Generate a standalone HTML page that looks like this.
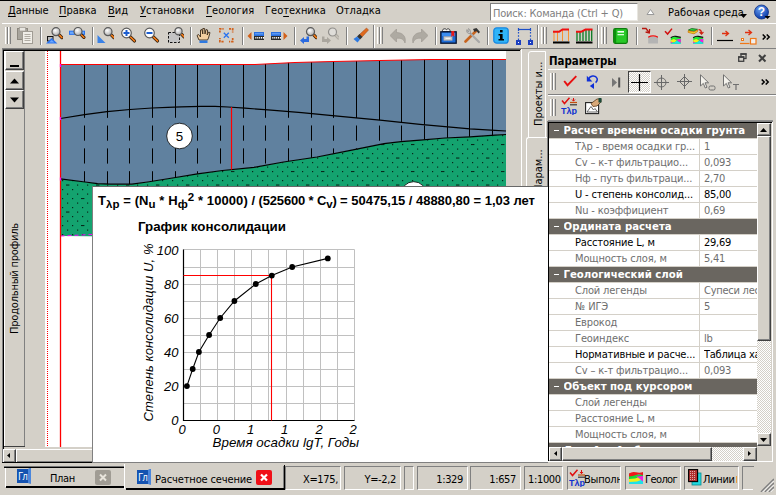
<!DOCTYPE html>
<html lang="ru"><head><meta charset="utf-8"><title>Расчетное сечение</title>
<style>
html,body{margin:0;padding:0;}
body{width:776px;height:495px;overflow:hidden;background:#d4d0c8;position:relative;font-family:'DejaVu Sans Condensed','Liberation Sans',sans-serif;font-size:11px;color:#000;}
.a{position:absolute;white-space:nowrap;}
.ui{font-family:'DejaVu Sans Condensed','Liberation Sans',sans-serif;font-size:11px;line-height:13px;}
.ar{font-family:'Liberation Sans',sans-serif;}
u{text-decoration:underline;text-underline-offset:1.5px;text-decoration-skip-ink:none;text-decoration-thickness:1px;}
.btn{position:absolute;background:#d4d0c8;box-sizing:border-box;border:1px solid;border-color:#fff #404040 #404040 #fff;box-shadow:inset -1px -1px 0 #808080;}
.sunk{position:absolute;box-sizing:border-box;border:1px solid;border-color:#808080 #fff #fff #808080;}
.grip{position:absolute;width:1px;height:17px;background:#d4d0c8;border-left:1px solid #fff;border-right:1px solid #808080;}
.sep{position:absolute;width:1px;height:18px;background:#808080;border-right:1px solid #fff;}
.row{position:absolute;left:549px;width:208px;height:16px;box-sizing:border-box;border-bottom:1px solid #d4d0c8;background:#fff;}
.hdr{background:#6a6660;color:#fff;font-weight:bold;}
.cell{position:absolute;top:0;height:15px;line-height:15px;overflow:hidden;white-space:nowrap;}
.dis{color:#6e6e6e;}
.chk{background-image:conic-gradient(#fff 25%,#d4d0c8 0 50%,#fff 0 75%,#d4d0c8 0);background-size:2px 2px;}
</style></head><body>

<div class="a" style="left:0;top:0;width:776px;height:1px;background:#000"></div>
<div class="a ui" style="left:8px;top:4px"><u>Д</u>анные</div>
<div class="a ui" style="left:59px;top:4px"><u>П</u>равка</div>
<div class="a ui" style="left:108px;top:4px"><u>В</u>ид</div>
<div class="a ui" style="left:140px;top:4px"><u>У</u>становки</div>
<div class="a ui" style="left:206px;top:4px"><u>Г</u>еология</div>
<div class="a ui" style="left:265px;top:4px">Гео<u>т</u>ехника</div>
<div class="a ui" style="left:336px;top:4px">Отладка</div>
<div class="a" style="left:490px;top:3px;width:148px;height:18px;box-sizing:border-box;background:#fff;border:1px solid;border-color:#808080 #e8e6e0 #e8e6e0 #808080;"></div>
<div class="a ui" style="left:493px;top:7px;color:#808080;letter-spacing:-0.19px">Поиск: Команда (Ctrl + Q)</div>
<svg class="a" style="left:646px;top:8px" width="9" height="8"><path d="M1 6.5 L4.5 1.5 L8 6.5 Z" fill="#fff" stroke="#9a9a9a"/></svg>
<div class="a ui" style="left:668px;top:6px;">Рабочая среда</div>
<svg class="a" style="left:740px;top:13.5px" width="7" height="4"><path d="M0 0 H7 L3.5 4 Z" fill="#000"/></svg>
<svg class="a" style="left:753px;top:4px" width="19" height="17" viewBox="0 0 19 17"><defs><radialGradient id="hg" cx="40%" cy="30%" r="70%"><stop offset="0" stop-color="#6aa0f0"/><stop offset="1" stop-color="#0a3aa8"/></radialGradient></defs><circle cx="8.5" cy="8" r="7" fill="url(#hg)" stroke="#0a2f86" stroke-width=".8"/><text x="8.5" y="12.3" text-anchor="middle" font-family="Liberation Sans,sans-serif" font-weight="bold" font-size="12" fill="#fff">?</text><path d="M11.5 12 H17.5 L14.5 15 Z" fill="#000"/></svg>
<div class="a" style="left:2px;top:23px;width:774px;height:1px;background:#fff"></div>
<svg width="0" height="0" style="position:absolute"><defs><radialGradient id="gl" cx="40%" cy="35%" r="70%"><stop offset="0" stop-color="#ffffff"/><stop offset="1" stop-color="#a8a8a8"/></radialGradient></defs></svg>
<div class="grip" style="left:5px;top:27px;height:17px"></div>
<div class="grip" style="left:8px;top:27px;height:17px"></div>
<svg class="a" style="left:17px;top:27px" width="17" height="18" viewBox="0 0 17 18"><rect x="0.5" y="1.5" width="10" height="11" fill="#a8a59d" stroke="#8c887f"/><rect x="2.5" y="0.5" width="6" height="3.5" fill="#e8e6e0" stroke="#a09c94" stroke-width=".7"/><rect x="5.5" y="4.5" width="10" height="12" fill="#f0eee8" stroke="#a09c94"/><path d="M7.5 7.5H13.5M7.5 9.5H13.5M7.5 11.5H13.5M7.5 13.5H13.5" stroke="#b0aca4" stroke-width="1"/></svg>
<div class="sep" style="left:40px;top:27px;height:18px"></div>
<svg class="a" style="left:46px;top:27px" width="17" height="17" viewBox="0 0 17 17"><line x1="13.479999999999999" y1="8.18" x2="15.879999999999999" y2="10.58" stroke="#2a1a0a" stroke-width="3.2" stroke-linecap="round"/><line x1="13.479999999999999" y1="8.18" x2="15.879999999999999" y2="10.58" stroke="#f07a18" stroke-width="1.7" stroke-linecap="round"/><circle cx="10" cy="4.7" r="4" fill="url(#gl)" stroke="#5a5a5a" stroke-width="1.2"/><rect x="1.5" y="9.5" width="5.5" height="4.5" fill="#b8b8b8" stroke="#111"/><path d="M0 16.6 L5.7 11 L11.4 16.6 Z" fill="#2a74f0"/><path d="M3 15.6 L5.7 13 L8.4 15.6 Z" fill="#6aa8ff"/></svg>
<svg class="a" style="left:69px;top:27px" width="17" height="17" viewBox="0 0 17 17"><rect x="0" y="3.7" width="16" height="4.2" fill="#2a74f0"/><rect x="1" y="4.7" width="14" height="2.2" fill="#6aa8ff"/><line x1="12.479999999999999" y1="7.9799999999999995" x2="14.879999999999999" y2="10.379999999999999" stroke="#2a1a0a" stroke-width="3.2" stroke-linecap="round"/><line x1="12.479999999999999" y1="7.9799999999999995" x2="14.879999999999999" y2="10.379999999999999" stroke="#f07a18" stroke-width="1.7" stroke-linecap="round"/><circle cx="9" cy="4.5" r="4" fill="url(#gl)" stroke="#5a5a5a" stroke-width="1.2"/></svg>
<div class="sep" style="left:92px;top:27px;height:18px"></div>
<svg class="a" style="left:97px;top:27px" width="17" height="17" viewBox="0 0 17 17"><line x1="14.479999999999999" y1="8.18" x2="16.88" y2="10.58" stroke="#2a1a0a" stroke-width="3.2" stroke-linecap="round"/><line x1="14.479999999999999" y1="8.18" x2="16.88" y2="10.58" stroke="#f07a18" stroke-width="1.7" stroke-linecap="round"/><circle cx="11" cy="4.7" r="4" fill="url(#gl)" stroke="#5a5a5a" stroke-width="1.2"/><path d="M0.5 16 V8 L8.5 16 Z" fill="#3a82e6"/></svg>
<svg class="a" style="left:121px;top:27px" width="17" height="17" viewBox="0 0 17 17"><line x1="9.556" y1="10.056" x2="13.456" y2="13.956" stroke="#2a1a0a" stroke-width="3.2" stroke-linecap="round"/><line x1="9.556" y1="10.056" x2="13.456" y2="13.956" stroke="#f07a18" stroke-width="1.7" stroke-linecap="round"/><circle cx="5.5" cy="6" r="4.8" fill="#fff" stroke="#5a5a5a" stroke-width="1.2"/><path d="M2.5 6H8.5M5.5 3V9" stroke="#1c5ed0" stroke-width="2"/></svg>
<svg class="a" style="left:144px;top:27px" width="17" height="17" viewBox="0 0 17 17"><line x1="9.556" y1="10.056" x2="13.456" y2="13.956" stroke="#2a1a0a" stroke-width="3.2" stroke-linecap="round"/><line x1="9.556" y1="10.056" x2="13.456" y2="13.956" stroke="#f07a18" stroke-width="1.7" stroke-linecap="round"/><circle cx="5.5" cy="6" r="4.8" fill="#fff" stroke="#5a5a5a" stroke-width="1.2"/><path d="M2.5 6H8.5" stroke="#1c5ed0" stroke-width="2"/></svg>
<svg class="a" style="left:167px;top:27px" width="17" height="17" viewBox="0 0 17 17"><rect x="1.5" y="5.5" width="11" height="10" fill="#c4c4c4" stroke="#111" stroke-dasharray="2.5 1.5"/><line x1="14.692" y1="7.3919999999999995" x2="17.092" y2="9.792" stroke="#2a1a0a" stroke-width="3.2" stroke-linecap="round"/><line x1="14.692" y1="7.3919999999999995" x2="17.092" y2="9.792" stroke="#f07a18" stroke-width="1.7" stroke-linecap="round"/><circle cx="11.5" cy="4.2" r="3.6" fill="url(#gl)" stroke="#5a5a5a" stroke-width="1.2"/></svg>
<div class="sep" style="left:190px;top:27px;height:18px"></div>
<svg class="a" style="left:196px;top:27px" width="16" height="17" viewBox="0 0 16 17"><path d="M3 13 L1 8.5 L2.5 7.5 L4.5 10 V3 L6 2.5 L6.8 7 V1.5 L8.6 1.5 L9 7 L10 2.5 L11.6 3 L11.2 8 L12.6 5 L14 5.6 L12.5 11 L11.5 13 Z" fill="#f3cfa0" stroke="#3a2a1a" stroke-width=".9" stroke-linejoin="round"/><rect x="3.5" y="13.5" width="8" height="2.5" fill="#2f7ae0"/></svg>
<svg class="a" style="left:219px;top:28px" width="15" height="15" viewBox="0 0 15 15"><path d="M4.8 4.8 L9.8 9.8 M9.8 4.8 L4.8 9.8" stroke="#2a74f0" stroke-width="1.3"/><path d="M0.9 4.6 V0.9 H4.6 M10 0.9 H13.7 V4.6 M13.7 10 V13.7 H10 M4.6 13.7 H0.9 V10" fill="none" stroke="#d2601a" stroke-width="1.7" stroke-dasharray="2.2 0.9"/></svg>
<div class="sep" style="left:242px;top:27px;height:18px"></div>
<svg class="a" style="left:247px;top:29px" width="18" height="14" viewBox="0 0 18 14"><path d="M0.5 7 L4.5 3 V11 Z" fill="#d2601a"/><rect x="7" y="3" width="10" height="8" fill="#2a2a2a"/><rect x="7" y="3" width="10" height="4" fill="#2a70e0"/><rect x="8" y="4" width="8" height="1.5" fill="#5a98f4"/><rect x="8.3" y="8" width="1.1" height="1.6" fill="#fff"/><rect x="10.200000000000001" y="8" width="1.1" height="1.6" fill="#fff"/><rect x="12.100000000000001" y="8" width="1.1" height="1.6" fill="#fff"/><rect x="14.0" y="8" width="1.1" height="1.6" fill="#fff"/><rect x="15.9" y="8" width="1.1" height="1.6" fill="#fff"/></svg>
<svg class="a" style="left:270px;top:29px" width="18" height="14" viewBox="0 0 18 14"><path d="M17.5 7 L13.5 3 V11 Z" fill="#d2601a"/><rect x="1" y="3" width="10" height="8" fill="#2a2a2a"/><rect x="1" y="3" width="10" height="4" fill="#2a70e0"/><rect x="2" y="4" width="8" height="1.5" fill="#5a98f4"/><rect x="2.3" y="8" width="1.1" height="1.6" fill="#fff"/><rect x="4.199999999999999" y="8" width="1.1" height="1.6" fill="#fff"/><rect x="6.1" y="8" width="1.1" height="1.6" fill="#fff"/><rect x="7.999999999999999" y="8" width="1.1" height="1.6" fill="#fff"/><rect x="9.899999999999999" y="8" width="1.1" height="1.6" fill="#fff"/></svg>
<div class="sep" style="left:294px;top:27px;height:18px"></div>
<svg class="a" style="left:300px;top:27px" width="17" height="17" viewBox="0 0 17 17"><line x1="13.979999999999999" y1="8.18" x2="16.38" y2="10.58" stroke="#2a1a0a" stroke-width="3.2" stroke-linecap="round"/><line x1="13.979999999999999" y1="8.18" x2="16.38" y2="10.58" stroke="#f07a18" stroke-width="1.7" stroke-linecap="round"/><circle cx="10.5" cy="4.7" r="4" fill="url(#gl)" stroke="#5a5a5a" stroke-width="1.2"/><path d="M0 13.5 L4 10 V12 H6.5 V9.5 H9 V15 H4 V17 Z" fill="#2a6ae0"/></svg>
<svg class="a" style="left:322px;top:27px" width="17" height="17" viewBox="0 0 17 17"><g opacity=".55"><line x1="13.979999999999999" y1="8.48" x2="16.38" y2="10.879999999999999" stroke="#8c887f" stroke-width="3.2" stroke-linecap="round"/><line x1="13.979999999999999" y1="8.48" x2="16.38" y2="10.879999999999999" stroke="#b8b4ac" stroke-width="1.7" stroke-linecap="round"/><circle cx="10.5" cy="5" r="4" fill="#e8e8e8" stroke="#5a5a5a" stroke-width="1.2"/></g><path d="M9 13.5 L5 10 V12 H2.5 V9.5 H0 V15 H5 V17 Z" fill="#aaa69e"/></svg>
<div class="sep" style="left:346px;top:27px;height:18px"></div>
<svg class="a" style="left:353px;top:27px" width="16" height="17" viewBox="0 0 16 17"><path d="M13.5 1 L15.5 3 L9 10 L6.5 7.5 Z" fill="#e06a1e" stroke="#a04410" stroke-width=".5"/><path d="M6.5 7 L9.5 10 L7 12.5 L4 9.5 Z" fill="#333"/><path d="M4 9.5 L7 12.5 L4.5 15.5 L0.5 12 Z" fill="#2f7ae0"/></svg>
<div class="sep" style="left:373px;top:25px;height:23px"></div>
<div class="grip" style="left:377px;top:27px;height:17px"></div>
<div class="grip" style="left:380px;top:27px;height:17px"></div>
<svg class="a" style="left:390px;top:28px" width="17" height="16" viewBox="0 0 17 16"><path d="M0 7.5 L6.5 1 V4.5 C13 4.5 16.5 9 15 15 C13.5 10.5 10.5 10 6.5 10.3 V14 Z" fill="#aeaaa2" stroke="#9a968e" stroke-width=".6"/></svg>
<svg class="a" style="left:411px;top:28px" width="17" height="16" viewBox="0 0 17 16"><path d="M17 7.5 L10.5 1 V4.5 C4 4.5 0.5 9 2 15 C3.5 10.5 6.5 10 10.5 10.3 V14 Z" fill="#aeaaa2" stroke="#9a968e" stroke-width=".6"/></svg>
<div class="sep" style="left:435px;top:27px;height:18px"></div>
<svg class="a" style="left:440px;top:27px" width="17" height="17" viewBox="0 0 17 17"><path d="M2.5 4.5 C2 1.8 5 1 6.5 2.6 C8 1 10.5 2 10 4.5 Z" fill="#f4f4f4" stroke="#333" stroke-width="1"/><rect x="0.8" y="4.8" width="15.4" height="11.4" fill="#1c6cd8" stroke="#0a1430" stroke-width="1.3"/><rect x="2" y="6" width="13" height="3" fill="#3a8cf0"/><rect x="3.8" y="9.3" width="8.4" height="4.2" fill="#c8c8c8" stroke="#8a98b0" stroke-width=".6"/><rect x="5.5" y="10.8" width="5" height="1.2" fill="#f0f0f0"/><path d="M11.3 4 H14.3 V10 L12.8 8.6 L11.3 10 Z" fill="#e81818"/></svg>
<svg class="a" style="left:464px;top:27px" width="17" height="17" viewBox="0 0 17 17"><path d="M1.5 14.5 L12 4" stroke="#c8641e" stroke-width="2.6" stroke-linecap="round"/><path d="M9 2 L12.5 1 L16 5 L14.5 6.5 L12.5 4 L10.5 5 Z" fill="#333"/><path d="M15 15 L6.5 6.5" stroke="#a8a8a8" stroke-width="2.2" stroke-linecap="round"/><path d="M3 2.5 C2 4 3 6.5 5 6.5 L6.8 6.8 L6.5 5 C6.5 3 5.5 2 4.5 1.5 L5 4 L4 4.8 Z" fill="#c4c4c4" stroke="#777" stroke-width=".5"/></svg>
<div class="sep" style="left:487px;top:27px;height:18px"></div>
<svg class="a" style="left:493px;top:27px" width="16" height="17" viewBox="0 0 16 17"><rect x="0.8" y="0.8" width="14.4" height="15.4" rx="3" fill="#30b4f8" stroke="#1a88e0" stroke-width="1.3"/><rect x="7" y="3" width="2.6" height="2.4" fill="#000"/><path d="M5.5 7 H9.6 V12 H11 V13.6 H5.5 V12 H7 V8.6 H5.5 Z" fill="#000"/></svg>
<svg class="a" style="left:516px;top:28px" width="17" height="17" viewBox="0 0 17 17"><path d="M2.5 1.5 H14.5" stroke="#1c4fc8" stroke-width="1.2"/><path d="M2.5 0 V3 M14.5 0 V3" stroke="#1c4fc8" stroke-width="1.2"/><path d="M2.5 4 V13 M14.5 4 V13" stroke="#1c4fc8" stroke-width="1.2" stroke-dasharray="1.6 1.6"/><rect x="1" y="13" width="3" height="3" fill="#fff" stroke="#1c3fc0" stroke-width="1.1" shape-rendering="crispEdges"/><rect x="13" y="13" width="3" height="3" fill="#fff" stroke="#1c3fc0" stroke-width="1.1" shape-rendering="crispEdges"/></svg>
<div class="sep" style="left:537px;top:25px;height:23px"></div>
<div class="grip" style="left:541px;top:27px;height:17px"></div>
<div class="grip" style="left:544px;top:27px;height:17px"></div>
<svg class="a" style="left:553px;top:28px" width="17" height="17" viewBox="0 0 17 17"><path d="M1 2.8 V13 M4.5 2.8 V13 M9.5 1 V13 M15.5 1 V13" stroke="#f89030" stroke-width="1"/><path d="M0 3.8 H6 L9.5 1.5 H16" fill="none" stroke="#f01010" stroke-width="2"/><rect x="0" y="13.5" width="16.5" height="2" fill="#000"/></svg>
<svg class="a" style="left:576px;top:28px" width="17" height="17" viewBox="0 0 17 17"><path d="M1 4 V13 M4 4 V13 M7 2.5 V13 M10 1.5 V13 M13 1.5 V13 M15.7 1.5 V13" stroke="#0a7a22" stroke-width="1.3"/><path d="M0 3.8 H5 L9.5 1.5 H16.5" fill="none" stroke="#f01010" stroke-width="2"/><rect x="0" y="13.5" width="16.5" height="2" fill="#000"/></svg>
<div class="sep" style="left:597px;top:25px;height:23px"></div>
<div class="grip" style="left:601px;top:27px;height:17px"></div>
<div class="grip" style="left:604px;top:27px;height:17px"></div>
<svg class="a" style="left:613px;top:28px" width="15" height="16" viewBox="0 0 15 16"><rect x="0.7" y="0.7" width="13.6" height="14.6" rx="1.5" fill="#28c828" stroke="#0c7c0c" stroke-width="1.2"/><rect x="0.9" y="0.9" width="2.3" height="14.2" fill="#0c900c"/><rect x="4.5" y="3" width="6.5" height="1.6" fill="#f4fff4"/><rect x="4.5" y="6" width="6.5" height="1.3" fill="#d8ffd8"/></svg>
<div class="sep" style="left:636px;top:27px;height:18px"></div>
<svg class="a" style="left:641px;top:27px" width="17" height="17" viewBox="0 0 17 17"><path d="M1 1.5 H5 L8 5.5" fill="none" stroke="#b81810" stroke-width="1.3"/><path d="M8.6 2 L8.3 6 L4.6 5" fill="none" stroke="#b81810" stroke-width="1.3"/><rect x="7.2" y="10" width="9.8" height="6.5" fill="#b4b4b4"/><path d="M7.2 10.2 Q12 7.4 17 10.2" fill="none" stroke="#f01010" stroke-width="1.2"/></svg>
<svg class="a" style="left:664px;top:27px" width="17" height="18" viewBox="0 0 17 18"><path d="M1 4.2 L3.6 7 L8 1.6" fill="none" stroke="#d01010" stroke-width="1.5"/><g transform="translate(6.8,8.8)"><path d="M0 2 Q2.5 0 5 0.6 T10 1.6 V8 H0 Z" fill="#20e838"/><path d="M0 2 Q2.5 0 5 0.6 T10 1.6" fill="none" stroke="#101010" stroke-width="1.2"/><path d="M0 4.5 L3 3.2 L6 4.6 L4 6.5 L0 7 Z" fill="#f4ec18"/><path d="M5.5 3.6 L10 3 V7 L7.5 5.6 Z" fill="#f020e0"/><path d="M0 8 V7 L3.5 6.8 L6.2 5 L10 7.2 V8 Z" fill="#18e0f0"/><path d="M0 5.6 L2 6.8 L0 7.4 Z" fill="#f020e0"/></g></svg>
<svg class="a" style="left:687px;top:27px" width="17" height="18" viewBox="0 0 17 18"><path d="M1.2 3.2 L4.5 1.5 L10.5 2.3 L7 4.3 Z" fill="#30d040" stroke="#106a18" stroke-width=".8"/><path d="M1.2 5.4 L1.2 3.8 L7 4.9 L10.5 2.9 V4.6 L7 6.8 Z" fill="#f4e020" stroke="#d07010" stroke-width=".8"/><path d="M11.5 2.6 C13.5 2.6 14.5 4 14.5 6.2 M12.6 5 L14.5 7.2 L16.4 5" fill="none" stroke="#d02010" stroke-width="1.2"/><g transform="translate(6.2,8.8)"><path d="M0 2 Q2.5 0 5 0.6 T10 1.6 V8 H0 Z" fill="#20e838"/><path d="M0 2 Q2.5 0 5 0.6 T10 1.6" fill="none" stroke="#101010" stroke-width="1.2"/><path d="M0 4.5 L3 3.2 L6 4.6 L4 6.5 L0 7 Z" fill="#f4ec18"/><path d="M5.5 3.6 L10 3 V7 L7.5 5.6 Z" fill="#f020e0"/><path d="M0 8 V7 L3.5 6.8 L6.2 5 L10 7.2 V8 Z" fill="#18e0f0"/><path d="M0 5.6 L2 6.8 L0 7.4 Z" fill="#f020e0"/></g></svg>
<div class="sep" style="left:711px;top:27px;height:18px"></div>
<svg class="a" style="left:717px;top:29.5px" width="17" height="12" viewBox="0 0 17 12"><path d="M5 3.5 H11 M8.5 1 L11.5 3.5 L8.5 6" fill="none" stroke="#e03010" stroke-width="1.3"/><path d="M0 10.5 H16" stroke="#000" stroke-width="1.2"/></svg>
<svg class="a" style="left:740px;top:29px" width="17" height="16" viewBox="0 0 17 16"><path d="M5 3.5 H11 M8.5 1 L11.5 3.5 L8.5 6" fill="none" stroke="#e03010" stroke-width="1.3"/><rect x="1.5" y="9.5" width="2" height="2" fill="#fff" stroke="#f07818" stroke-width="1"/><path d="M0 14.5 H9.5" stroke="#f07818" stroke-width="1.2"/><rect x="10.5" y="9.5" width="5.5" height="5.5" fill="#f0f0f0" stroke="#f07818" stroke-width="1.2"/></svg>
<svg class="a" style="left:762px;top:34px" width="9" height="6"><path d="M0.7 0.5 L3.2 3 L0.7 5.5 M4.7 0.5 L7.2 3 L4.7 5.5" fill="none" stroke="#000" stroke-width="1.5"/></svg><div class="a" style="left:2px;top:48px;width:774px;height:1px;background:#808080"></div>
<div class="a" style="left:2px;top:49px;width:519px;height:1px;background:#505050"></div>
<div class="a" style="left:3px;top:50px;width:517px;height:1px;background:#000"></div>
<div class="a" style="left:2px;top:49px;width:1px;height:414px;background:#808080"></div>
<div class="a" style="left:3px;top:50px;width:1px;height:412px;background:#000"></div>
<div class="a" style="left:4px;top:51px;width:502px;height:411px;background:#fff"></div>
<div class="a" style="left:521px;top:49px;width:1px;height:414px;background:#fff"></div>
<div class="a" style="left:4px;top:51px;width:41px;height:396px;background:#d4d0c8"></div>
<div class="a" style="left:4px;top:51px;width:1px;height:396px;background:#fff"></div>
<div class="a" style="left:24px;top:51px;width:1px;height:396px;background:#808080"></div>
<div class="a" style="left:4px;top:446px;width:21px;height:1px;background:#404040"></div>
<div class="btn" style="left:5px;top:51px;width:19px;height:19px"></div>
<div class="a" style="left:10px;top:65px;width:9px;height:2px;background:#000"></div>
<div class="btn" style="left:5px;top:71px;width:19px;height:19px"></div>
<svg class="a" style="left:10px;top:78px" width="9" height="6"><path d="M0 5.5 H9 L4.5 0.5 Z" fill="#000"/></svg>
<div class="btn" style="left:5px;top:90px;width:19px;height:19px"></div>
<svg class="a" style="left:10px;top:97px" width="9" height="6"><path d="M0 0.5 H9 L4.5 5.5 Z" fill="#000"/></svg>
<div class="a ui" style="left:8px;top:334px;width:113px;height:13px;transform-origin:0 0;transform:rotate(-90deg);font-size:11px;letter-spacing:-0.2px">Продольный профиль</div>
<div class="a" style="left:4px;top:447px;width:503px;height:2px;background:#d4d0c8"></div>
<div class="a" style="left:4px;top:449px;width:503px;height:14px;background:#d4d0c8"></div>
<div class="btn" style="left:3px;top:449px;width:13px;height:14px"></div>
<svg class="a" style="left:7px;top:453px" width="3" height="5"><path d="M3 0 V5 L0 2.5 Z" fill="#000"/></svg>
<div class="btn" style="left:16px;top:449px;width:300px;height:14px"></div>
<div class="a" style="left:2px;top:462px;width:90px;height:1px;background:#000"></div>
<svg class="a" style="left:0;top:0" width="776" height="495" viewBox="0 0 776 495"><defs><pattern id="dots" x="60" y="178" width="30" height="27" patternUnits="userSpaceOnUse"><rect width="30" height="27" fill="#14a36f"/><rect x="2" y="2.0" width="1.2" height="1.2" fill="#06281a"/><rect x="12" y="2.0" width="1.2" height="1.2" fill="#06281a"/><rect x="22" y="2.0" width="1.2" height="1.2" fill="#06281a"/><rect x="6" y="6.5" width="3.4" height="1.1" fill="#06281a"/><rect x="17" y="6.5" width="1.2" height="1.2" fill="#06281a"/><rect x="27" y="6.5" width="1.2" height="1.2" fill="#06281a"/><rect x="2" y="11.0" width="1.2" height="1.2" fill="#06281a"/><rect x="12" y="11.0" width="1.2" height="1.2" fill="#06281a"/><rect x="22" y="11.0" width="1.2" height="1.2" fill="#06281a"/><rect x="7" y="15.5" width="1.2" height="1.2" fill="#06281a"/><rect x="17" y="15.5" width="1.2" height="1.2" fill="#06281a"/><rect x="27" y="15.5" width="1.2" height="1.2" fill="#06281a"/><rect x="2" y="20.0" width="1.2" height="1.2" fill="#06281a"/><rect x="12" y="20.0" width="1.2" height="1.2" fill="#06281a"/><rect x="21" y="20.0" width="3.4" height="1.1" fill="#06281a"/><rect x="7" y="24.5" width="1.2" height="1.2" fill="#06281a"/><rect x="17" y="24.5" width="1.2" height="1.2" fill="#06281a"/><rect x="27" y="24.5" width="1.2" height="1.2" fill="#06281a"/></pattern></defs><path d="M47.5 51 V447" stroke="#f00" stroke-width="1" stroke-dasharray="1 1" fill="none"/><polygon points="60.5,64.5 255.0,64.5 295.0,62.5 333.0,61.5 380.0,60.5 430.0,59.5 506.0,59.5 506.0,134.5 495.0,135.1 470.0,136.8 445.0,138.0 420.0,140.1 401.0,141.6 384.0,143.6 350.5,150.3 317.0,157.0 283.5,162.0 254.0,167.3 222.5,170.5 197.5,173.8 172.5,178.0 147.5,182.0 132.0,184.2 110.0,184.2 97.5,183.6 85.0,182.0 60.5,178.8" fill="#60819f"/><polygon points="60.5,178.8 85.0,182.0 97.5,183.6 110.0,184.2 132.0,184.2 147.5,182.0 172.5,178.0 197.5,173.8 222.5,170.5 254.0,167.3 283.5,162.0 317.0,157.0 350.5,150.3 384.0,143.6 401.0,141.6 420.0,140.1 445.0,138.0 470.0,136.8 495.0,135.1 506.0,134.5 506.0,240.0 60.5,236.0" fill="url(#dots)"/><path d="M84.5 64.5 V114.7" stroke="#000" stroke-width="1"/><path d="M84.5 114.7 V181.9" stroke="#000" stroke-width="1" stroke-dasharray="15.2 7.66" stroke-dashoffset="12.06"/><path d="M107.5 64.5 V111.6" stroke="#000" stroke-width="1"/><path d="M107.5 111.6 V184.1" stroke="#000" stroke-width="1" stroke-dasharray="15.2 7.66" stroke-dashoffset="8.91"/><path d="M129.5 64.5 V109.5" stroke="#000" stroke-width="1"/><path d="M129.5 109.5 V184.2" stroke="#000" stroke-width="1" stroke-dasharray="15.2 7.66" stroke-dashoffset="6.91"/><path d="M152.5 64.5 V108.0" stroke="#000" stroke-width="1"/><path d="M152.5 108.0 V181.2" stroke="#000" stroke-width="1" stroke-dasharray="15.2 7.66" stroke-dashoffset="5.34"/><path d="M175.5 64.5 V107.0" stroke="#000" stroke-width="1"/><path d="M175.5 107.0 V177.5" stroke="#000" stroke-width="1" stroke-dasharray="15.2 7.66" stroke-dashoffset="4.41"/><path d="M197.5 64.5 V106.5" stroke="#000" stroke-width="1"/><path d="M197.5 106.5 V173.8" stroke="#000" stroke-width="1" stroke-dasharray="15.2 7.66" stroke-dashoffset="3.83"/><path d="M220.5 64.5 V106.7" stroke="#000" stroke-width="1"/><path d="M220.5 106.7 V170.8" stroke="#000" stroke-width="1" stroke-dasharray="15.2 7.66" stroke-dashoffset="4.01"/><path d="M243.5 64.5 V108.1" stroke="#000" stroke-width="1"/><path d="M243.5 108.1 V168.4" stroke="#000" stroke-width="1" stroke-dasharray="15.2 7.66" stroke-dashoffset="5.45"/><path d="M265.5 64.0 V109.7" stroke="#000" stroke-width="1"/><path d="M265.5 109.7 V165.2" stroke="#000" stroke-width="1" stroke-dasharray="15.2 7.66" stroke-dashoffset="7.08"/><path d="M288.5 62.8 V111.5" stroke="#000" stroke-width="1"/><path d="M288.5 111.5 V161.3" stroke="#000" stroke-width="1" stroke-dasharray="15.2 7.66" stroke-dashoffset="8.91"/><path d="M311.5 62.1 V113.5" stroke="#000" stroke-width="1"/><path d="M311.5 113.5 V157.8" stroke="#000" stroke-width="1" stroke-dasharray="15.2 7.66" stroke-dashoffset="10.91"/><path d="M333.5 61.5 V115.7" stroke="#000" stroke-width="1"/><path d="M333.5 115.7 V153.7" stroke="#000" stroke-width="1" stroke-dasharray="15.2 7.66" stroke-dashoffset="13.02"/><path d="M356.5 61.0 V117.9" stroke="#000" stroke-width="1"/><path d="M356.5 117.9 V149.1" stroke="#000" stroke-width="1" stroke-dasharray="15.2 7.66" stroke-dashoffset="15.26"/><path d="M379.5 60.5 V120.2" stroke="#000" stroke-width="1"/><path d="M379.5 120.2 V144.5" stroke="#000" stroke-width="1" stroke-dasharray="15.2 7.66" stroke-dashoffset="17.51"/><path d="M401.5 60.1 V122.4" stroke="#000" stroke-width="1"/><path d="M401.5 122.4 V141.6" stroke="#000" stroke-width="1" stroke-dasharray="15.2 7.66" stroke-dashoffset="19.76"/><path d="M424.5 59.6 V124.7" stroke="#000" stroke-width="1"/><path d="M424.5 124.7 V139.7" stroke="#000" stroke-width="1" stroke-dasharray="15.2 7.66" stroke-dashoffset="22.07"/><path d="M447.5 59.5 V126.8" stroke="#000" stroke-width="1"/><path d="M447.5 126.8 V137.9" stroke="#000" stroke-width="1" stroke-dasharray="15.2 7.66" stroke-dashoffset="1.33"/><path d="M469.5 59.5 V128.9" stroke="#000" stroke-width="1"/><path d="M469.5 128.9 V136.8" stroke="#000" stroke-width="1" stroke-dasharray="15.2 7.66" stroke-dashoffset="3.35"/><path d="M492.5 59.5 V130.2" stroke="#000" stroke-width="1"/><path d="M492.5 130.2 V135.3" stroke="#000" stroke-width="1" stroke-dasharray="15.2 7.66" stroke-dashoffset="4.75"/><polyline points="60.5,118.5 84.5,114.7 107.0,111.6 130.0,109.5 152.0,108.0 167.6,107.4 181.0,106.8 201.0,106.4 215.0,106.4 228.0,107.0 245.0,108.2 268.0,109.9 301.6,112.6 335.0,115.8 380.0,120.2 420.0,124.3 445.0,126.6 470.0,128.9 495.0,130.4 506.0,131.0" fill="none" stroke="#000" stroke-width="1.2"/><polyline points="60.5,178.8 85.0,182.0 97.5,183.6 110.0,184.2 132.0,184.2 147.5,182.0 172.5,178.0 197.5,173.8 222.5,170.5 254.0,167.3 283.5,162.0 317.0,157.0 350.5,150.3 384.0,143.6 401.0,141.6 420.0,140.1 445.0,138.0 470.0,136.8 495.0,135.1 506.0,134.5" fill="none" stroke="#000" stroke-width="1.2"/><path d="M60.5 236 L92 234.5" stroke="#f0f" stroke-width="1" stroke-dasharray="4 3" fill="none"/><polyline points="60.5,64.5 255.0,64.5 295.0,62.5 333.0,61.5 380.0,60.5 430.0,59.5 506.0,59.5" fill="none" stroke="#f00" stroke-width="1.2"/><path d="M60.5 51 V447" stroke="#f00" stroke-width="1.3" fill="none"/><path d="M60.5 117 V120 M60.5 177.5 V180.5 M60.5 64 V67" stroke="#f0f" stroke-width="1.3" fill="none"/><path d="M231.5 107.2 V169.6" stroke="#f00" stroke-width="1.2"/><circle cx="179.5" cy="136" r="12.8" fill="#fff" stroke="#000" stroke-width="0.8"/><text x="179.5" y="140.5" text-anchor="middle" font-family="'Liberation Sans',sans-serif" font-size="13.3">5</text><circle cx="413.7" cy="194.5" r="12.8" fill="#fff" stroke="#000" stroke-width="0.8"/><text x="413.7" y="199" text-anchor="middle" font-family="'Liberation Sans',sans-serif" font-size="13.3">5</text></svg>
<div class="a" style="z-index:5;left:92px;top:186px;width:456px;height:277px;background:#fff;box-sizing:border-box;border-left:1px solid #808080;border-top:1px solid #686868;"></div>
<div class="a" style="z-index:5;left:92px;top:462px;width:456px;height:1px;background:#808080"></div>
<div class="a ar" style="z-index:6;top:193px;font-size:13px;font-weight:bold;line-height:15px;left:98px;letter-spacing:0.08px">T<span style="position:relative;top:3px;font-size:11.5px">λр</span> = (N<span style="position:relative;top:3px;font-size:11.5px">u</span> * H<span style="position:relative;top:3px;font-size:11.5px">ф</span><span style="position:relative;top:-4px;font-size:11.5px">2</span> * 10000) /</div>
<div class="a ar" style="z-index:6;top:193px;font-size:13px;font-weight:bold;line-height:15px;left:258.5px;letter-spacing:-0.16px">(525600 * C<span style="position:relative;top:3px;font-size:11.5px">v</span>) =</div>
<div class="a ar" style="z-index:6;top:193px;font-size:13px;font-weight:bold;line-height:15px;left:351.3px;letter-spacing:-0.03px">50475,15 / 48880,80 = 1,03 лет</div>
<div class="a ar" style="z-index:6;left:138px;top:219px;font-size:13.33px;font-weight:bold;line-height:15px;">График консолидации</div>
<svg class="a" style="z-index:6;left:0;top:0" width="776" height="495" viewBox="0 0 776 495"><path d="M183.5 249.5 V420.5 M183.5 249.5 H354.5 M200.5 249.5 V420.5 M183.5 267.5 H354.5 M217.5 249.5 V420.5 M183.5 284.5 H354.5 M234.5 249.5 V420.5 M183.5 301.5 H354.5 M251.5 249.5 V420.5 M183.5 318.5 H354.5 M268.5 249.5 V420.5 M183.5 335.5 H354.5 M286.5 249.5 V420.5 M183.5 352.5 H354.5 M303.5 249.5 V420.5 M183.5 369.5 H354.5 M320.5 249.5 V420.5 M183.5 386.5 H354.5 M337.5 249.5 V420.5 M183.5 403.5 H354.5 M354.5 249.5 V420.5 M183.5 420.5 H354.5" stroke="#c0c0c0" stroke-width="1" fill="none"/><path d="M183.5 249.5 V420.5 H354.5" stroke="#000" stroke-width="1.2" fill="none"/><polyline points="186.9,386.1 192.7,369.0 198.9,352.0 209.1,335.0 220.2,318.0 234.4,301.0 255.8,284.0 271.8,275.6 292.2,267.0 327.8,258.4" fill="none" stroke="#000" stroke-width="1.1"/><path d="M183.5 275.5 H271.5 V420.5" stroke="#f00" stroke-width="1.1" fill="none"/><circle cx="186.9" cy="386.1" r="2.9" fill="#000"/><circle cx="192.7" cy="369" r="2.9" fill="#000"/><circle cx="198.9" cy="352" r="2.9" fill="#000"/><circle cx="209.1" cy="335" r="2.9" fill="#000"/><circle cx="220.2" cy="318" r="2.9" fill="#000"/><circle cx="234.4" cy="301" r="2.9" fill="#000"/><circle cx="255.8" cy="284" r="2.9" fill="#000"/><circle cx="271.8" cy="275.6" r="2.9" fill="#000"/><circle cx="292.2" cy="267" r="2.9" fill="#000"/><circle cx="327.8" cy="258.4" r="2.9" fill="#000"/><text x="178.5" y="254.6" text-anchor="end" font-family="'Liberation Sans',sans-serif" font-style="italic" font-size="13">100</text><text x="178.5" y="288.6" text-anchor="end" font-family="'Liberation Sans',sans-serif" font-style="italic" font-size="13">80</text><text x="178.5" y="322.6" text-anchor="end" font-family="'Liberation Sans',sans-serif" font-style="italic" font-size="13">60</text><text x="178.5" y="356.6" text-anchor="end" font-family="'Liberation Sans',sans-serif" font-style="italic" font-size="13">40</text><text x="178.5" y="390.6" text-anchor="end" font-family="'Liberation Sans',sans-serif" font-style="italic" font-size="13">20</text><text x="178.5" y="424.6" text-anchor="end" font-family="'Liberation Sans',sans-serif" font-style="italic" font-size="13">0</text><text x="182.2" y="434.3" text-anchor="middle" font-family="'Liberation Sans',sans-serif" font-style="italic" font-size="13">0</text><text x="216.39999999999998" y="434.3" text-anchor="middle" font-family="'Liberation Sans',sans-serif" font-style="italic" font-size="13">0</text><text x="250.6" y="434.3" text-anchor="middle" font-family="'Liberation Sans',sans-serif" font-style="italic" font-size="13">1</text><text x="284.7" y="434.3" text-anchor="middle" font-family="'Liberation Sans',sans-serif" font-style="italic" font-size="13">1</text><text x="319.0" y="434.3" text-anchor="middle" font-family="'Liberation Sans',sans-serif" font-style="italic" font-size="13">2</text><text x="353.2" y="434.3" text-anchor="middle" font-family="'Liberation Sans',sans-serif" font-style="italic" font-size="13">2</text><text x="212.6" y="446.5" font-family="'Liberation Sans',sans-serif" font-style="italic" font-size="13.33" textLength="146.5">Время осадки lgT, Годы</text><text transform="translate(153.2,421.5) rotate(-90)" font-family="'Liberation Sans',sans-serif" font-style="italic" font-size="13" textLength="178">Степень консолидации U, %</text></svg><div class="a" style="left:528px;top:51px;width:18px;height:87px;box-sizing:border-box;border:1px solid #fff;border-radius:3px 0 0 0"></div>
<div class="a ui" style="left:532px;top:126px;transform-origin:0 0;transform:rotate(-90deg);">Проекты и...</div>
<div class="a" style="left:526px;top:137px;width:22px;height:326px;box-sizing:border-box;border-left:1px solid #fff;border-top:1px solid #fff;border-radius:3px 0 0 0"></div>
<div class="a ui" style="left:532px;top:192px;transform-origin:0 0;transform:rotate(-90deg);">Парам...</div>
<div class="a" style="left:548px;top:69px;width:228px;height:1px;background:#fff"></div>
<div class="a" style="left:548px;top:94px;width:228px;height:1px;background:#808080"></div>
<div class="a" style="left:548px;top:95px;width:228px;height:1px;background:#fff"></div>
<div class="a ui" style="left:549px;top:55px;font-weight:bold;font-size:11.4px">Параметры</div>
<svg class="a" style="left:738px;top:53px" width="10" height="10" viewBox="0 0 10 10"><rect x="3" y="1" width="5" height="4.5" fill="none" stroke="#404040" stroke-width="1.3"/><path d="M2.4 1 H8.6" stroke="#404040" stroke-width="1.6"/><rect x="0.7" y="4" width="5" height="4.3" fill="#d4d0c8" stroke="#404040" stroke-width="1.3"/><path d="M0.1 4 H6.3" stroke="#404040" stroke-width="1.6"/></svg>
<svg class="a" style="left:758px;top:54px" width="9" height="9" viewBox="0 0 9 9"><path d="M1 1 L7.5 7.5 M7.5 1 L1 7.5" stroke="#404040" stroke-width="2"/></svg>
<div class="grip" style="left:550px;top:73px;height:17px"></div>
<div class="grip" style="left:553px;top:73px;height:17px"></div>
<svg class="a" style="left:563px;top:75px" width="16" height="14" viewBox="0 0 16 14"><path d="M1.2 6 L4.5 10.2 L13.3 1.2" fill="none" stroke="#e81010" stroke-width="1.9"/></svg>
<svg class="a" style="left:586px;top:74px" width="12" height="17" viewBox="0 0 12 17"><path d="M2.5 5.5 C3.5 1.5 9.5 0.8 11 4.2 C11.7 6.2 10.8 7.6 9.6 8.6" fill="none" stroke="#1030d8" stroke-width="1.5"/><path d="M0.8 1.8 V7.6 H6.4 Z" fill="#1030d8"/><path d="M3.8 12 L8 9 V15 Z" fill="#1030d8"/></svg>
<svg class="a" style="left:611px;top:77px" width="10" height="11" viewBox="0 0 10 11"><path d="M1 1 L6 5.5 L1 10 Z" fill="#777"/><rect x="7.2" y="0.5" width="2" height="10" fill="#555"/></svg>
<div class="a chk" style="left:628px;top:71px;width:23px;height:22px;box-sizing:border-box;border:1px solid;border-color:#404040 #fff #fff #404040"></div>
<svg class="a" style="left:631px;top:74px" width="17" height="17" viewBox="0 0 17 17"><path d="M0 8.5 H17 M8.5 0 V17" stroke="#000" stroke-width="1.2"/></svg>
<svg class="a" style="left:654px;top:75px" width="15" height="15" viewBox="0 0 15 15"><circle cx="7.5" cy="7.5" r="4.5" fill="none" stroke="#686868" stroke-width="1"/><path d="M0 7.5 H15 M7.5 0 V15" stroke="#686868" stroke-width="1"/></svg>
<svg class="a" style="left:677px;top:74px" width="15" height="15" viewBox="0 0 15 15"><path d="M7.5 2.5 L12.5 7.5 L7.5 12.5 L2.5 7.5 Z" fill="none" stroke="#686868" stroke-width="1"/><path d="M0 7.5 H15 M7.5 0 V15" stroke="#686868" stroke-width="1"/></svg>
<svg class="a" style="left:699px;top:74px" width="17" height="17" viewBox="0 0 17 17"><path d="M1.5 0.8 V12 L4.3 9.4 L6.3 14 L8 13.2 L6 8.8 H9.6 Z" fill="#f4f2ec" stroke="#707070" stroke-width="1"/><rect x="10" y="12" width="6" height="4" rx="1.5" fill="none" stroke="#707070" stroke-width="1"/></svg>
<svg class="a" style="left:722px;top:74px" width="17" height="17" viewBox="0 0 17 17"><path d="M1.5 0.8 V12 L4.3 9.4 L6.3 14 L8 13.2 L6 8.8 H9.6 Z" fill="#f4f2ec" stroke="#707070" stroke-width="1"/><path d="M11 10.5 H17 M14 10.5 V16" stroke="#707070" stroke-width="1.2"/></svg>
<svg class="a" style="left:761px;top:79px" width="9" height="6"><path d="M0.7 0.5 L3.2 3 L0.7 5.5 M4.7 0.5 L7.2 3 L4.7 5.5" fill="none" stroke="#000" stroke-width="1.5"/></svg>
<div class="grip" style="left:550px;top:99px;height:17px"></div>
<div class="grip" style="left:553px;top:99px;height:17px"></div>
<svg class="a" style="left:561px;top:97px" width="17" height="18" viewBox="0 0 17 18"><path d="M1 3.5 L3.5 6.5 L8.5 0.8" fill="none" stroke="#e01010" stroke-width="1.5"/><path d="M9 5.5 H16" stroke="#c05010" stroke-width="1.2"/><path d="M12.5 1 V4 M11 2.5 L12.5 4.2 L14 2.5" stroke="#e01010" stroke-width="1" fill="none"/><rect x="9" y="7" width="7" height="1.5" fill="#555"/><text x="0" y="17" font-family="Liberation Sans,sans-serif" font-weight="bold" font-size="9" fill="#1030d0">Tλр</text></svg>
<svg class="a" style="left:585px;top:98px" width="17" height="17" viewBox="0 0 17 17"><rect x="0.6" y="4.6" width="13" height="11" fill="#fff" stroke="#222" stroke-width="1.1"/><path d="M2 14 L6 8.5 L8.5 12 L10 10.5 L12.5 14 Z" fill="none" stroke="#555" stroke-width=".9"/><path d="M6 5.5 L12 1 L16 1 V4 L12 8 L8 8.5 Z" fill="#d8a878" stroke="#5a3a1a" stroke-width=".8"/><rect x="13.5" y="0" width="3" height="4.5" fill="#1a4a3a"/></svg>
<div class="a" style="left:549px;top:123px;width:208px;height:324px;background:#fff"></div>
<div class="row hdr ui" style="top:123px;height:16px;"><div class="a" style="left:5px;top:7px;width:5px;height:1px;background:#fff"></div><div class="cell" style="left:14.5px;width:192px;font-size:11.3px">Расчет времени осадки грунта</div></div>
<div class="row ui" style="top:139px"><div class="cell dis" style="left:26px;width:124px;letter-spacing:-0.15px">Тλр - время осадки гр...</div><div class="a" style="left:150px;top:0;width:1px;height:15px;background:#d4d0c8"></div><div class="cell dis" style="left:155px;width:54px;letter-spacing:-0.25px">1</div></div>
<div class="row ui" style="top:155px"><div class="cell dis" style="left:26px;width:124px;letter-spacing:-0.15px">Cv – к-т фильтрацио...</div><div class="a" style="left:150px;top:0;width:1px;height:15px;background:#d4d0c8"></div><div class="cell dis" style="left:155px;width:54px;letter-spacing:-0.25px">0,093</div></div>
<div class="row ui" style="top:171px"><div class="cell dis" style="left:26px;width:124px;letter-spacing:-0.15px">Нф - путь фильтраци...</div><div class="a" style="left:150px;top:0;width:1px;height:15px;background:#d4d0c8"></div><div class="cell dis" style="left:155px;width:54px;letter-spacing:-0.25px">2,70</div></div>
<div class="row ui" style="top:187px"><div class="cell " style="left:26px;width:124px;letter-spacing:-0.15px">U - степень консолид...</div><div class="a" style="left:150px;top:0;width:1px;height:15px;background:#d4d0c8"></div><div class="cell " style="left:155px;width:54px;letter-spacing:-0.25px">85,00</div></div>
<div class="row ui" style="top:203px"><div class="cell dis" style="left:26px;width:124px;letter-spacing:-0.15px">Nu - коэффициент</div><div class="a" style="left:150px;top:0;width:1px;height:15px;background:#d4d0c8"></div><div class="cell dis" style="left:155px;width:54px;letter-spacing:-0.25px">0,69</div></div>
<div class="row hdr ui" style="top:219px;height:16px;"><div class="a" style="left:5px;top:7px;width:5px;height:1px;background:#fff"></div><div class="cell" style="left:14.5px;width:192px;font-size:11.3px">Ордината расчета</div></div>
<div class="row ui" style="top:235px"><div class="cell " style="left:26px;width:124px;letter-spacing:-0.15px">Расстояние L, м</div><div class="a" style="left:150px;top:0;width:1px;height:15px;background:#d4d0c8"></div><div class="cell " style="left:155px;width:54px;letter-spacing:-0.25px">29,69</div></div>
<div class="row ui" style="top:251px"><div class="cell dis" style="left:26px;width:124px;letter-spacing:-0.15px">Мощность слоя, м</div><div class="a" style="left:150px;top:0;width:1px;height:15px;background:#d4d0c8"></div><div class="cell dis" style="left:155px;width:54px;letter-spacing:-0.25px">5,41</div></div>
<div class="row hdr ui" style="top:267px;height:16px;"><div class="a" style="left:5px;top:7px;width:5px;height:1px;background:#fff"></div><div class="cell" style="left:14.5px;width:192px;font-size:11.3px">Геологический слой</div></div>
<div class="row ui" style="top:283px"><div class="cell dis" style="left:26px;width:124px;letter-spacing:-0.15px">Слой легенды</div><div class="a" style="left:150px;top:0;width:1px;height:15px;background:#d4d0c8"></div><div class="cell dis" style="left:155px;width:54px;letter-spacing:-0.25px">Супеси лес</div></div>
<div class="row ui" style="top:299px"><div class="cell dis" style="left:26px;width:124px;letter-spacing:-0.15px">№ ИГЭ</div><div class="a" style="left:150px;top:0;width:1px;height:15px;background:#d4d0c8"></div><div class="cell dis" style="left:155px;width:54px;letter-spacing:-0.25px">5</div></div>
<div class="row ui" style="top:315px"><div class="cell dis" style="left:26px;width:124px;letter-spacing:-0.15px">Еврокод</div><div class="a" style="left:150px;top:0;width:1px;height:15px;background:#d4d0c8"></div><div class="cell dis" style="left:155px;width:54px;letter-spacing:-0.25px"></div></div>
<div class="row ui" style="top:331px"><div class="cell dis" style="left:26px;width:124px;letter-spacing:-0.15px">Геоиндекс</div><div class="a" style="left:150px;top:0;width:1px;height:15px;background:#d4d0c8"></div><div class="cell dis" style="left:155px;width:54px;letter-spacing:-0.25px">lb</div></div>
<div class="row ui" style="top:347px"><div class="cell " style="left:26px;width:124px;letter-spacing:-0.15px">Нормативные и расче...</div><div class="a" style="left:150px;top:0;width:1px;height:15px;background:#d4d0c8"></div><div class="cell " style="left:155px;width:54px;letter-spacing:-0.25px">Таблица хар</div></div>
<div class="row ui" style="top:363px"><div class="cell dis" style="left:26px;width:124px;letter-spacing:-0.15px">Cv – к-т фильтрацио...</div><div class="a" style="left:150px;top:0;width:1px;height:15px;background:#d4d0c8"></div><div class="cell dis" style="left:155px;width:54px;letter-spacing:-0.25px">0,093</div></div>
<div class="row hdr ui" style="top:379px;height:16px;"><div class="a" style="left:5px;top:7px;width:5px;height:1px;background:#fff"></div><div class="cell" style="left:14.5px;width:192px;font-size:11.3px">Объект под курсором</div></div>
<div class="row ui" style="top:395px"><div class="cell dis" style="left:26px;width:124px;letter-spacing:-0.15px">Слой легенды</div><div class="a" style="left:150px;top:0;width:1px;height:15px;background:#d4d0c8"></div><div class="cell dis" style="left:155px;width:54px;letter-spacing:-0.25px"></div></div>
<div class="row ui" style="top:411px"><div class="cell dis" style="left:26px;width:124px;letter-spacing:-0.15px">Расстояние L, м</div><div class="a" style="left:150px;top:0;width:1px;height:15px;background:#d4d0c8"></div><div class="cell dis" style="left:155px;width:54px;letter-spacing:-0.25px"></div></div>
<div class="row ui" style="top:427px"><div class="cell dis" style="left:26px;width:124px;letter-spacing:-0.15px">Мощность слоя, м</div><div class="a" style="left:150px;top:0;width:1px;height:15px;background:#d4d0c8"></div><div class="cell dis" style="left:155px;width:54px;letter-spacing:-0.25px"></div></div>
<div class="row hdr ui" style="top:443px;height:5px;overflow:hidden;"><div class="a" style="left:5px;top:7px;width:5px;height:1px;background:#fff"></div><div class="cell" style="left:14.5px;width:192px;font-size:11.3px">Линейный объект</div></div>
<div class="a" style="left:548px;top:120px;width:225px;height:1px;background:#909090"></div>
<div class="a" style="left:548px;top:121px;width:225px;height:1px;background:#808080"></div>
<div class="a" style="left:548px;top:122px;width:224px;height:1px;background:#000"></div>
<div class="a" style="left:548px;top:122px;width:1px;height:339px;background:#000"></div>
<div class="a" style="left:547px;top:121px;width:1px;height:341px;background:#808080"></div>
<div class="a chk" style="left:757px;top:123px;width:14px;height:323px"></div>
<div class="btn" style="left:757px;top:123px;width:14px;height:13px"></div>
<svg class="a" style="left:760px;top:128px" width="7" height="4"><path d="M0 4 H7 L3.5 0 Z" fill="#000"/></svg>
<div class="btn" style="left:757px;top:136px;width:14px;height:205px"></div>
<div class="btn" style="left:757px;top:433px;width:14px;height:13px"></div>
<svg class="a" style="left:760px;top:438px" width="7" height="4"><path d="M0 0 H7 L3.5 4 Z" fill="#000"/></svg>
<div class="a" style="left:771px;top:123px;width:1px;height:338px;background:#d4d0c8"></div>
<div class="a chk" style="left:549px;top:447px;width:208px;height:14px"></div>
<div class="btn" style="left:549px;top:447px;width:13px;height:14px"></div>
<svg class="a" style="left:554px;top:451px" width="3" height="5"><path d="M3 0 V5 L0 2.5 Z" fill="#000"/></svg>
<div class="btn" style="left:562px;top:447px;width:150px;height:14px"></div>
<div class="btn" style="left:743px;top:447px;width:14px;height:14px"></div>
<svg class="a" style="left:748px;top:451px" width="3" height="5"><path d="M0 0 V5 L3 2.5 Z" fill="#000"/></svg>
<div class="a" style="left:757px;top:446px;width:15px;height:15px;background:#d4d0c8"></div>
<div class="a" style="left:548px;top:461px;width:225px;height:1px;background:#fff"></div>
<div class="a" style="left:772px;top:122px;width:1px;height:340px;background:#fff"></div>
<div class="a" style="left:4px;top:466px;width:121px;height:1px;background:#707070"></div>
<div class="a" style="left:4px;top:467px;width:121px;height:1px;background:#000"></div>
<div class="a" style="left:5px;top:468px;width:1px;height:19px;background:#fff"></div>
<div class="a" style="left:6px;top:486px;width:119px;height:2px;background:#000"></div>
<svg class="a" style="left:17px;top:468px" width="15" height="16" viewBox="0 0 15 16"><path d="M0 1 H11 L14 0 V15.5 L11 15 H0 Z" fill="#1452b0"/><path d="M11 1 L14 0 V15.5 L11 15 Z" fill="#4a86dc"/><text x="1.2" y="11.8" font-family="Liberation Sans,sans-serif" font-size="10.5" fill="#fff" textLength="9.5" lengthAdjust="spacingAndGlyphs">Гл</text></svg>
<div class="a ui" style="left:50px;top:472px;font-size:11px;letter-spacing:-0.4px">План</div>
<svg class="a" style="left:95px;top:470px" width="16" height="15" viewBox="0 0 16 15"><rect x="0" y="0" width="16" height="15" rx="2" fill="#a09c94"/><path d="M5 4.5 L11 10.5 M11 4.5 L5 10.5" stroke="#e8e4dc" stroke-width="2"/></svg>
<div class="a" style="left:124px;top:464px;width:1px;height:25px;background:#fff"></div>
<div class="a" style="left:284px;top:465px;width:1px;height:24px;background:#000"></div>
<div class="a" style="left:126px;top:488px;width:159px;height:2px;background:#000"></div>
<div class="a" style="left:283px;top:466px;width:1px;height:22px;background:#808080"></div>
<svg class="a" style="left:137px;top:469px" width="15" height="16" viewBox="0 0 15 16"><path d="M0 1 H11 L14 0 V15.5 L11 15 H0 Z" fill="#1452b0"/><path d="M11 1 L14 0 V15.5 L11 15 Z" fill="#4a86dc"/><text x="1.2" y="11.8" font-family="Liberation Sans,sans-serif" font-size="10.5" fill="#fff" textLength="9.5" lengthAdjust="spacingAndGlyphs">Гл</text></svg>
<div class="a ui" style="left:155px;top:473px;font-size:11px;letter-spacing:-0.14px">Расчетное сечение</div>
<svg class="a" style="left:256px;top:470px" width="16" height="15" viewBox="0 0 16 15"><rect x="0" y="0" width="16" height="15" rx="2" fill="#f01018"/><path d="M5 4.5 L11 10.5 M11 4.5 L5 10.5" stroke="#fff" stroke-width="2.2"/></svg>
<div class="sunk ui" style="left:285px;top:466px;width:56px;height:24px;line-height:25px;text-align:right;padding:0 2px;overflow:hidden;font-size:11px;letter-spacing:-0.35px">X=175,</div>
<div class="sunk ui" style="left:344px;top:466px;width:57px;height:24px;line-height:25px;text-align:right;padding:0 4px;overflow:hidden;font-size:11px;letter-spacing:-0.35px">Y=-2,2</div>
<div class="sunk ui" style="left:404px;top:466px;width:10px;height:24px;line-height:25px;text-align:right;padding:0 4px;overflow:hidden;font-size:11px;letter-spacing:-0.35px"></div>
<div class="sunk ui" style="left:417px;top:466px;width:51px;height:24px;line-height:25px;text-align:right;padding:0 4px;overflow:hidden;font-size:11px;letter-spacing:-0.35px">1:329</div>
<div class="sunk ui" style="left:470px;top:466px;width:51px;height:24px;line-height:25px;text-align:right;padding:0 4px;overflow:hidden;font-size:11px;letter-spacing:-0.35px">1:657</div>
<div class="sunk ui" style="left:524px;top:466px;width:39px;height:24px;line-height:25px;text-align:right;padding:0 3px;overflow:hidden;font-size:11px;letter-spacing:-0.35px">1:1000</div>
<div class="sunk ui" style="left:567px;top:466px;width:54px;height:24px;line-height:25px;text-align:left;padding:0 4px;overflow:hidden;font-size:11px;letter-spacing:-0.35px"></div>
<div class="sunk ui" style="left:625px;top:466px;width:56px;height:24px;line-height:25px;text-align:left;padding:0 4px;overflow:hidden;font-size:11px;letter-spacing:-0.35px"></div>
<div class="sunk ui" style="left:684px;top:466px;width:55px;height:24px;line-height:25px;text-align:left;padding:0 4px;overflow:hidden;font-size:11px;letter-spacing:-0.35px"></div>
<div class="sunk ui" style="left:742px;top:466px;width:12px;height:24px;line-height:25px;text-align:right;padding:0 4px;overflow:hidden;font-size:11px;letter-spacing:-0.35px"></div>
<div class="a" style="left:753px;top:466px;width:2px;height:24px;background:#d4d0c8"></div>
<div class="a" style="left:753px;top:466px;width:1px;height:1px;background:#808080"></div>
<svg class="a" style="left:569px;top:469px" width="17" height="18" viewBox="0 0 17 18"><path d="M1 3.5 L3.5 6.5 L8.5 0.8" fill="none" stroke="#e01010" stroke-width="1.5"/><path d="M9 6 H16" stroke="#c05010" stroke-width="1.2"/><path d="M12.5 1 V4.5 M11 3 L12.5 4.7 L14 3" stroke="#e01010" stroke-width="1" fill="none"/><rect x="9" y="7.5" width="7" height="1.5" fill="#555"/><text x="0" y="17" font-family="Liberation Sans,sans-serif" font-weight="bold" font-size="9" fill="#1030d0">Tλр</text></svg>
<div class="a ui" style="left:584px;top:473px;width:36px;overflow:hidden;font-size:11px;letter-spacing:-0.2px">Выполнить</div>
<svg class="a" style="left:629px;top:471px" width="14" height="13" viewBox="0 0 14 13"><rect x="0" y="2" width="14" height="11" fill="#20e0e8"/><path d="M0 5 Q4 3 7.5 4 L14 4 V7 L9 6.5 L6 8.5 L0 8.5 Z" fill="#18d838"/><path d="M7 5.5 L14 5 V10.5 L10 7.5 Z" fill="#f020e0"/><path d="M0 8 L6 7.5 L9 6.5 L12 9 L8 10.5 L0 11 Z" fill="#f4ec18"/><path d="M0 2.5 Q3 0.3 7 1.3 T14 1 V4.3 Q10 3 7 4 T0 5.5 Z" fill="#f01818"/></svg>
<div class="a ui" style="left:645px;top:473px;width:35px;overflow:hidden;font-size:11px;letter-spacing:-0.6px">Геолог</div>
<svg class="a" style="left:688px;top:469px" width="14" height="17" viewBox="0 0 14 17"><rect x="4" y="4" width="9" height="12" fill="#20d8e0" stroke="#0a8a90" stroke-width=".8"/><rect x="0.6" y="0.6" width="9" height="12" fill="#b03030" stroke="#000" stroke-width="1.1"/><path d="M2 2.5h6M2 4.5h6M2 6.5h6M2 8.5h6M2 10.5h6" stroke="#e8c8c8" stroke-width=".8" stroke-dasharray="1 1"/></svg>
<div class="a ui" style="left:703px;top:473px;width:35px;overflow:hidden;font-size:11px;letter-spacing:-0.3px">Линии</div>
<div class="a" style="left:736px;top:476px;width:1px;height:7px;background:#e8a040"></div>
<svg class="a" style="left:760px;top:478px" width="14" height="14" viewBox="0 0 14 14"><path d="M14 1 L1 14 M14 5 L5 14 M14 9 L9 14" stroke="#808080" stroke-width="1.6"/><path d="M14 2.6 L2.6 14 M14 6.6 L6.6 14 M14 10.6 L10.6 14" stroke="#fff" stroke-width="1"/></svg>
</body></html>
